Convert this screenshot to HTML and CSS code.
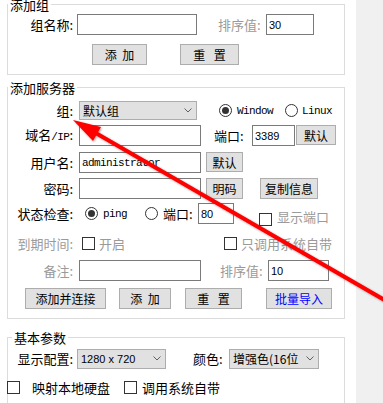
FILE: index.html
```html
<!DOCTYPE html>
<html lang="zh-CN">
<head>
    <meta charset="UTF-8">
    <meta name="viewport" content="width=device-width, initial-scale=1.0">
    <title>添加服务器</title>
    <link rel="stylesheet" href="styles.css">
</head>
<body>

<div class="window">
    <div class="panel">

        <!-- 添加组 -->
        <fieldset class="group group-add">
            <legend>添加组</legend>
            <div class="row g1-r1">
                <span class="lbl">组名称:</span>
                <input class="input g1-name" type="text">
                <span class="gray g1-sort-lbl">排序值:</span>
                <input class="input num g1-sort" type="text" value="30">
            </div>
            <div class="row g1-r2">
                <button class="btn sp-add g1-add">添 加</button>
                <button class="btn sp-reset g1-reset">重 置</button>
            </div>
        </fieldset>

        <!-- 添加服务器 -->
        <fieldset class="group group-server">
            <legend>添加服务器</legend>
            <div class="row r1">
                <span class="lbl">组:</span>
                <div class="select sel-group">
                    <span>默认组</span>
                    <svg class="chev" width="8" height="5" viewBox="0 0 8 5"><path d="M0.5 0.5 L4 4 L7.5 0.5" fill="none" stroke="#606060" stroke-width="1"/></svg>
                </div>
                <span class="radio on m-win"></span><span class="latin opt t-win">Window</span>
                <span class="radio m-linux"></span><span class="latin opt t-linux">Linux</span>
            </div>
            <div class="row r2">
                <span class="lbl">域名<span class="latin">/IP</span>:</span>
                <input class="input w-long" type="text">
                <span class="port-lbl">端口:</span>
                <input class="input num w-port" type="text" value="3389">
                <button class="btn top b-def1">默认</button>
            </div>
            <div class="row r3">
                <span class="lbl">用户名:</span>
                <input class="input latin w-long" type="text" value="administrator">
                <button class="btn top b-def2">默认</button>
            </div>
            <div class="row r4">
                <span class="lbl">密码:</span>
                <input class="input w-long" type="password">
                <button class="btn b-def2">明码</button>
                <button class="btn b-copy">复制信息</button>
            </div>
            <div class="row r5">
                <span class="lbl">状态检查:</span>
                <span class="radio on m-ping"></span><span class="latin opt t-ping">ping</span>
                <span class="radio m-port"></span><span class="opt t-port">端口:</span>
                <input class="input num w-port2" type="text" value="80">
                <span class="box low m-show"></span><span class="opt gray low">显示端口</span>
            </div>
            <div class="row r6">
                <span class="lbl gray">到期时间:</span>
                <span class="box m-open"></span><span class="opt gray t-open">开启</span>
                <span class="box m-sys"></span><span class="opt gray">只调用系统自带</span>
            </div>
            <div class="row r7">
                <span class="lbl gray">备注:</span>
                <input class="input w-long" type="text">
                <span class="gray sort-lbl">排序值:</span>
                <input class="input num w-sort2" type="text" value="10">
            </div>
            <div class="row r8">
                <button class="btn b-conn">添加并连接</button>
                <button class="btn sp-add b-add">添 加</button>
                <button class="btn sp-reset b-reset">重 置</button>
                <button class="btn blue b-import">批量导入</button>
            </div>
        </fieldset>

        <!-- 基本参数 -->
        <fieldset class="group group-basic">
            <legend>基本参数</legend>
            <div class="row g3-r1">
                <span class="lbl">显示配置:</span>
                <div class="select sel-size">
                    <span class="num">1280 x 720</span>
                    <svg class="chev" width="8" height="5" viewBox="0 0 8 5"><path d="M0.5 0.5 L4 4 L7.5 0.5" fill="none" stroke="#606060" stroke-width="1"/></svg>
                </div>
                <span class="color-lbl">颜色:</span>
                <div class="select sel-color">
                    <span>增强色(16位</span>
                    <svg class="chev" width="8" height="5" viewBox="0 0 8 5"><path d="M0.5 0.5 L4 4 L7.5 0.5" fill="none" stroke="#606060" stroke-width="1"/></svg>
                </div>
            </div>
            <div class="row g3-r2">
                <span class="box m-disk"></span><span class="opt t-disk">映射本地硬盘</span>
                <span class="box m-sys2"></span><span class="opt">调用系统自带</span>
            </div>
        </fieldset>
    </div>
    <div class="side"></div>

    <!-- 标注箭头 -->
    <svg class="arrow" width="383" height="403" viewBox="0 0 383 403">
        <defs>
            <filter id="shadow" x="-10%" y="-10%" width="120%" height="120%">
                <feDropShadow dx="1" dy="1" stdDeviation="1" flood-color="#000" flood-opacity="0.35"/>
            </filter>
        </defs>
        <g filter="url(#shadow)">
            <line x1="94" y1="132" x2="400" y2="309" stroke="#f00" stroke-width="4"/>
            <polygon points="73,120 101,127 93,141" fill="#f00"/>
        </g>
    </svg>
</div>

</body>
</html>
```

FILE: styles.css
```css
* {
    box-sizing: border-box;
}
body {
    margin: 0;
    font-family: "Noto Sans CJK SC", sans-serif;
    font-size: 13px;
    color: #000000;
}
.window {
    position: relative;
    display: flex;
    width: 383px;
    height: 403px;
    overflow: hidden;
}
.panel {
    width: 356px;
    background-color: #ffffff;
}
.side {
    flex: 1;
    background-color: #f0f0f0;
}
.arrow {
    position: absolute;
    left: 0;
    top: 0;
    pointer-events: none;
}

/* 分组框 */
.group {
    width: 338px;
    min-width: 0;
    margin: 0 0 0 7px;
    padding: 0 0 9px 0;
    border: 1px solid #dcdcdc;
}
.group legend {
    height: 15px;
    padding: 0 2px;
    font-size: 13px;
    line-height: 15px;
}
.group-add {
    margin-top: -3px;
}
.group-server {
    margin-top: 5px;
}
.group-basic {
    margin-top: 11px;
}
.group-basic legend {
    margin-left: 4px;
}

.row {
    display: flex;
    align-items: center;
    height: 21px;
    white-space: nowrap;
}
.lbl {
    width: 65px;
    flex: none;
    text-align: right;
    line-height: 21px;
}
.gray {
    color: #9a9a9a;
}
.latin {
    font-family: "Liberation Mono", monospace;
    font-size: 11px;
    letter-spacing: -0.6px;
}
.num {
    font-family: "Liberation Sans", sans-serif;
    font-size: 11px;
}

/* 控件 */
.input {
    flex: none;
    height: 21px;
    padding: 0 2px;
    border: 1px solid #7a7a7a;
    border-radius: 0;
    background-color: #ffffff;
    outline: none;
}
.btn {
    flex: none;
    height: 21px;
    padding: 0;
    border: 1px solid #adadad;
    border-radius: 0;
    background-color: #e1e1e1;
    font-family: "Noto Sans CJK SC", sans-serif;
    font-size: 12px;
    color: #000000;
}
.btn.top {
    align-self: flex-start;
    height: 20px;
}
.btn.blue {
    color: #0000ff;
}
.sp-add {
    word-spacing: 3px;
}
.sp-reset {
    word-spacing: 6px;
}
.select {
    flex: none;
    display: flex;
    align-items: center;
    justify-content: space-between;
    height: 20px;
    padding: 0 4px 0 3px;
    border: 1px solid #adadad;
    background-color: #e1e1e1;
    font-size: 12px;
}
.radio {
    flex: none;
    display: flex;
    align-items: center;
    justify-content: center;
    width: 13px;
    height: 13px;
    border: 1px solid #333333;
    border-radius: 50%;
}
.radio.on::after {
    content: "";
    width: 7px;
    height: 7px;
    border-radius: 50%;
    background-color: #333333;
}
.box {
    flex: none;
    width: 13px;
    height: 13px;
    border: 1px solid #333333;
    background-color: #ffffff;
}
.opt {
    margin-left: 5px;
}
.low {
    align-self: flex-end;
    margin-bottom: -2px;
}

/* 添加组 */
.g1-r1 {
    margin-top: 2px;
}
.g1-r2 {
    margin-top: 9px;
}
.g1-name {
    width: 120px;
    margin-left: 4px;
}
.g1-sort-lbl {
    width: 48px;
    margin-left: 21px;
}
.g1-sort {
    width: 48px;
}
.g1-add {
    width: 55px;
    margin-left: 84px;
}
.g1-reset {
    width: 59px;
    margin-left: 33px;
}

/* 添加服务器 */
.r1 { margin-top: 5px; }
.r2 { margin-top: 4px; }
.r3 { margin-top: 6px; }
.r4 { margin-top: 5px; }
.r5 { margin-top: 4px; }
.r6 { margin-top: 9px; }
.r7 { margin-top: 6px; }
.r8 { margin-top: 7px; }

.sel-group {
    width: 118px;
    margin-left: 6px;
    height: 19px;
}
.m-win {
    margin-left: 22px;
}
.t-win {
    width: 36px;
}
.m-linux {
    margin-left: 12px;
}
.t-linux {
    margin-left: 4px;
}
.w-long {
    width: 122px;
    margin-left: 6px;
}
.port-lbl {
    width: 38px;
    margin-left: 13px;
}
.w-port {
    width: 43px;
}
.b-def1 {
    width: 40px;
    margin-left: 1px;
}
.b-def2 {
    width: 37px;
    margin-left: 5px;
}
.b-copy {
    width: 58px;
    margin-left: 17px;
}
.m-ping {
    margin-left: 12px;
}
.t-ping {
    width: 24px;
}
.m-port {
    margin-left: 18px;
}
.t-port {
    width: 35px;
}
.w-port2 {
    width: 36px;
}
.m-show {
    margin-left: 25px;
}
.m-open {
    margin-left: 9px;
}
.t-open {
    width: 26px;
    margin-left: 4px;
}
.m-sys {
    margin-left: 99px;
}
.m-sys + .opt {
    margin-left: 4px;
}
.sort-lbl {
    width: 48px;
    margin-left: 19px;
}
.w-sort2 {
    width: 61px;
}
.b-conn {
    width: 81px;
    margin-left: 17px;
}
.b-add {
    width: 52px;
    margin-left: 13px;
}
.b-reset {
    width: 57px;
    margin-left: 14px;
}
.b-import {
    width: 66px;
    margin-left: 24px;
}

/* 基本参数 */
.g3-r1 {
    margin-top: 3px;
}
.g3-r2 {
    margin-top: 8px;
}
.sel-size {
    width: 89px;
    margin-left: 4px;
}
.color-lbl {
    width: 36px;
    margin-left: 27px;
}
.sel-color {
    width: 90px;
}
.m-disk {
    margin-left: -1px;
}
.t-disk {
    margin-left: 12px;
}
.m-sys2 {
    margin-left: 14px;
}
```
